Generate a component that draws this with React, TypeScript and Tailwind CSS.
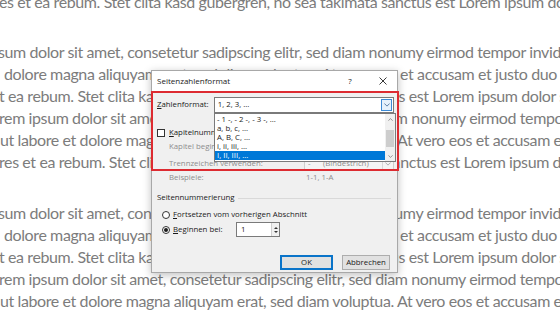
import React from 'react';

const topLine = { text: 'es et ea rebum. Stet clita kasd gubergren, no sea takimata sanctus est Lorem ipsum dolor sit', ml: 'ml-[-1px]' };

const paragraph = [
  { text: 'sum dolor sit amet, consetetur sadipscing elitr, sed diam nonumy eirmod tempor invidunt', ml: 'ml-[-2px]' },
  { text: 'dolore magna aliquyam erat, sed diam voluptua. At vero eos et accusam et justo duo', ml: 'ml-[4px]' },
  { text: 't ea rebum. Stet clita kasd gubergren, no sea takimata sanctus est Lorem ipsum dolor sit', ml: 'ml-[-1px]' },
  { text: 'rem ipsum dolor sit amet, consetetur sadipscing elitr, sed diam nonumy eirmod tempor', ml: 'ml-[-1px]' },
  { text: 'ut labore et dolore magna aliquyam erat, sed diam voluptua. At vero eos et accusam et', ml: 'ml-[0px]' },
  { text: 'res et ea rebum. Stet clita kasd gubergren, no sea takimata sanctus est Lorem ipsum dolor', ml: 'ml-[-1px]' },
];

const listItems = ['- 1 -, - 2 -, - 3 -, ...', 'a, b, c, ...', 'A, B, C, ...', 'i, ii, iii, ...', 'I, II, III, ...'];

const Chevron = ({ className = '' }: { className?: string }) => (
  <svg viewBox="0 0 8 5" className={className} fill="none" stroke="currentColor" strokeWidth="1">
    <path d="M0.5 0.5 L4 4 L7.5 0.5" />
  </svg>
);

const Line = ({ text, ml }: { text: string; ml: string }) => (
  <div className={`h-[22px] leading-[22px] whitespace-nowrap ${ml}`}>{text}</div>
);

const Dialog: React.FC = () => (
  <div className="absolute left-[151px] top-[70px] w-[247px] h-[203px] border border-[#a8a8a8] bg-[#f0f0f0] shadow-[0_2px_8px_rgba(0,0,0,0.25)] flex flex-col text-[7.8px] text-[#1a1a1a] font-['Open_Sans',sans-serif]">
    {/* title bar */}
    <div className="h-[20px] shrink-0 bg-white flex items-center pl-[5px]">
      <span className="text-[8px]">Seitenzahlenformat</span>
      <span className="ml-auto w-[10px] text-center mr-[23px] text-[8px]">?</span>
      <span className="w-[10px] mr-[9px] flex justify-center">
        <svg viewBox="0 0 8 8" className="w-[8px] h-[8px]" stroke="#222" strokeWidth="0.9">
          <path d="M0.5 0.5 L7.5 7.5 M7.5 0.5 L0.5 7.5" />
        </svg>
      </span>
    </div>

    {/* body */}
    <div className="flex flex-col pl-[5px] pr-[3px]">
      <div className="mt-[6px] h-[16px] flex items-center">
        <span className="w-[57px]"><span className="underline">Z</span>ahlenformat:</span>
        <div className="w-[181px] h-[16px] bg-white border border-[#7a7a7a] flex items-center pl-[3px]">
          <span>1, 2, 3, ...</span>
          <div className="ml-auto mr-[1px] w-[11px] h-[12px] bg-[#e5f1fb] border border-[#3c8ad5] flex items-center justify-center text-[#2d5a8a]">
            <Chevron className="w-[6px] h-[4px]" />
          </div>
        </div>
      </div>

      <div className="mt-[14px] h-[12px] flex items-center">
        <div className="w-[8px] h-[8px] bg-white border border-[#333]" />
        <span className="ml-[4px]"><span className="underline">K</span>apitelnummer einbeziehen</span>
      </div>

      <div className="mt-[2px] h-[12px] flex items-center pl-[12px] text-[#8d8d8d]">
        Kapitel beginnt mit Formatvorlage:
      </div>

      <div className="mt-[4px] h-[14px] flex items-center pl-[12px] text-[#8d8d8d]">
        <span>Trennzeichen verwenden:</span>
        <div className="ml-auto w-[90px] h-[14px] border border-[#cfcfcf] bg-[#f4f4f4] flex items-center pl-[3px]">
          <span className="w-[15px]">-</span>
          <span>(Bindestrich)</span>
          <div className="ml-auto w-[11px] h-full border-l border-[#d8d8d8] flex items-center justify-center text-[#9a9a9a]">
            <Chevron className="w-[6px] h-[4px]" />
          </div>
        </div>
      </div>

      <div className="mt-[1px] h-[12px] flex items-center pl-[12px] text-[#8d8d8d]">
        <span className="w-[137px]">Beispiele:</span>
        <span>1-1, 1-A</span>
      </div>

      <div className="mt-[8px] h-[12px] flex items-center pr-[3px]">
        <span>Seitennummerierung</span>
        <div className="flex-1 h-px bg-[#d9d9d9] ml-[4px]" />
      </div>

      <div className="mt-[5px] h-[12px] flex items-center pl-[5px]">
        <div className="w-[8px] h-[8px] rounded-full border border-[#333] bg-white" />
        <span className="ml-[3px]"><span className="underline">F</span>ortsetzen vom vorherigen Abschnitt</span>
      </div>

      <div className="mt-[1px] h-[15px] flex items-center pl-[5px]">
        <div className="w-[8px] h-[8px] rounded-full border border-[#333] bg-white flex items-center justify-center">
          <div className="w-[4px] h-[4px] rounded-full bg-[#1a1a1a]" />
        </div>
        <span className="ml-[3px] w-[63px]"><span className="underline">B</span>eginnen bei:</span>
        <div className="w-[44px] h-[15px] bg-white border border-[#7a7a7a] flex items-center pl-[4px]">
          <span>1</span>
          <div className="ml-auto w-[8px] h-full border-l border-[#cfcfcf] bg-[#f0f0f0] flex flex-col items-center justify-center gap-[2px]">
            <svg viewBox="0 0 4 2" className="w-[4px] h-[2px]" fill="#333"><path d="M0 2 L2 0 L4 2 Z" /></svg>
            <svg viewBox="0 0 4 2" className="w-[4px] h-[2px]" fill="#333"><path d="M0 0 L2 2 L4 0 Z" /></svg>
          </div>
        </div>
      </div>

      <div className="mt-[18px] h-[15px] flex items-center justify-end pr-[4px] gap-[9px]">
        <div className="w-[53px] h-[15px] bg-[#e1e1e1] border-2 border-[#0a74c9] flex items-center justify-center">OK</div>
        <div className="w-[48px] h-[15px] bg-[#e1e1e1] border border-[#adadad] flex items-center justify-center">Abbrechen</div>
      </div>
    </div>

    {/* open dropdown list */}
    <div className="absolute left-[62px] top-[42px] w-[182px] h-[49px] bg-white border border-[#7a7a7a] flex">
      <div className="flex-1 flex flex-col pt-[1px]">
        {listItems.map((item, i) => (
          <div
            key={item}
            className={`h-[9px] leading-[9px] pl-[2px] ${i === 4 ? 'bg-[#0078d7] text-white' : ''}`}
          >
            {item}
          </div>
        ))}
      </div>
      <div className="w-[10px] bg-[#f0f0f0] flex flex-col items-center text-[#555]">
        <div className="h-[10px] flex items-center justify-center">
          <Chevron className="w-[5px] h-[3px] rotate-180" />
        </div>
        <div className="mt-[6px] w-[8px] h-[17px] bg-[#cdcdcd]" />
        <div className="mt-auto h-[10px] flex items-center justify-center">
          <Chevron className="w-[5px] h-[3px]" />
        </div>
      </div>
    </div>

    {/* red highlight */}
    <div className="absolute left-[-1px] top-[20px] w-[248px] h-[80px] border-2 border-[#dd2b31] pointer-events-none" />
  </div>
);

export default function App() {
  return (
    <div className="relative w-[560px] h-[315px] overflow-hidden bg-white">
      <div className="font-['Lato',sans-serif] text-[16px] tracking-[-0.4px] text-[#7c7c7c]">
        <div className="mt-[-9px]">
          <Line {...topLine} />
        </div>
        <div className="mt-[28px]">
          {paragraph.map((l) => (
            <Line key={l.text} {...l} />
          ))}
        </div>
        <div className="mt-[29px]">
          {paragraph.map((l) => (
            <Line key={'b' + l.text} {...l} />
          ))}
        </div>
      </div>
      <Dialog />
    </div>
  );
}
